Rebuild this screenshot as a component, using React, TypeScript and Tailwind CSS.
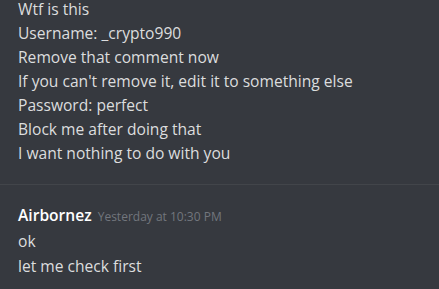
import React from "react";

const lines = [
  "Wtf is this",
  "Username: _crypto990",
  "Remove that comment now",
  "If you can't remove it, edit it to something else",
  "Password: perfect",
  "Block me after doing that",
  "I want nothing to do with you",
];

export default function App() {
  return (
    <div
      className="w-[439px] h-[289px] overflow-hidden bg-[#36393f] text-[#dcddde]"
      style={{ fontFamily: '"Open Sans", "Noto Sans", sans-serif' }}
    >
      <div className="pl-[18px] -mt-[3px] text-[15.6px] leading-[24px]">
        {lines.map((l) => (
          <div key={l}>{l}</div>
        ))}
      </div>
      <div className="mt-[19px] h-px bg-[#42454a]" />
      <div className="pl-[18px] pt-[18px] text-[15.6px] leading-[25px]">
        <div className="flex items-baseline gap-[6px]">
          <span className="font-semibold text-white">Airbornez</span>
          <span className="text-[12px] text-[#72767d]">Yesterday at 10:30 PM</span>
        </div>
        <div>ok</div>
        <div>let me check first</div>
      </div>
    </div>
  );
}
